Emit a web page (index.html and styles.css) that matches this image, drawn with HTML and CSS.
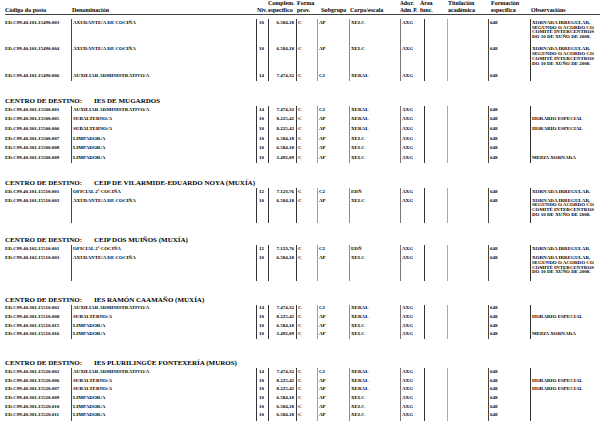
FILE: index.html
```html
<!DOCTYPE html>
<html lang="gl">
<head>
<meta charset="utf-8">
<title>Relación de postos</title>
<link rel="stylesheet" href="styles.css">
</head>
<body>
<div class="page">
  <div class="head">
    <div>Código do posto</div>
    <div>Denominación</div>
    <div>Niv.</div>
    <div>Complem.<br>específico</div>
    <div>Forma<br>prov.</div>
    <div>Subgrupo</div>
    <div>Corpo/escala</div>
    <div class="ads-h">Adscr.<br>Adm. P.</div>
    <div>Área<br>func.</div>
    <div>Titulación<br>académica</div>
    <div>Formación<br>específica</div>
    <div>Observacións</div>
  </div>

  <div class="sec first">
    <div class="row">
      <div class="c code">ED.C99.40.101.15490.003</div><div class="c den">AXUDANTE/A DE COCIÑA</div><div class="c niv">10</div><div class="c cmp">6.584,18</div><div class="c frm">C</div><div class="c sub">AP</div><div class="c crp">XELC</div><div class="c ads">AXG</div><div class="c are"></div><div class="c tit"></div><div class="c fmc">648</div><div class="c obs multi">XORNADA IRREGULAR,<br>SEGUNDO O ACORDO CO<br>COMITÉ INTERCENTROS<br>DO 10 DE XUÑO DE 2008.</div>
    </div>
    <div class="row">
      <div class="c code">ED.C99.40.101.15490.004</div><div class="c den">AXUDANTE/A DE COCIÑA</div><div class="c niv">10</div><div class="c cmp">6.584,18</div><div class="c frm">C</div><div class="c sub">AP</div><div class="c crp">XELC</div><div class="c ads">AXG</div><div class="c are"></div><div class="c tit"></div><div class="c fmc">648</div><div class="c obs multi">XORNADA IRREGULAR,<br>SEGUNDO O ACORDO CO<br>COMITÉ INTERCENTROS<br>DO 10 DE XUÑO DE 2008.</div>
    </div>
    <div class="row">
      <div class="c code">ED.C99.40.101.15490.006</div><div class="c den">AUXILIAR ADMINISTRATIVO/A</div><div class="c niv">14</div><div class="c cmp">7.474,32</div><div class="c frm">C</div><div class="c sub">C2</div><div class="c crp">XERAL</div><div class="c ads">AXG</div><div class="c are"></div><div class="c tit"></div><div class="c fmc">648</div><div class="c obs end"></div>
    </div>
  </div>

  <div class="dest">
    <span class="lbl">CENTRO DE DESTINO:</span><span>IES DE MUGARDOS</span>
  </div>
  <div class="sec loose">
    <div class="row">
      <div class="c code">ED.C99.40.301.15500.001</div><div class="c den">AUXILIAR ADMINISTRATIVO/A</div><div class="c niv">14</div><div class="c cmp">7.474,32</div><div class="c frm">C</div><div class="c sub">C2</div><div class="c crp">XERAL</div><div class="c ads">AXG</div><div class="c are"></div><div class="c tit"></div><div class="c fmc">648</div><div class="c obs"></div>
    </div>
    <div class="row">
      <div class="c code">ED.C99.40.301.15500.005</div><div class="c den">SUBALTERNO/A</div><div class="c niv">10</div><div class="c cmp">8.225,42</div><div class="c frm">C</div><div class="c sub">AP</div><div class="c crp">XERAL</div><div class="c ads">AXG</div><div class="c are"></div><div class="c tit"></div><div class="c fmc">648</div><div class="c obs">HORARIO ESPECIAL</div>
    </div>
    <div class="row">
      <div class="c code">ED.C99.40.301.15500.006</div><div class="c den">SUBALTERNO/A</div><div class="c niv">10</div><div class="c cmp">8.225,42</div><div class="c frm">C</div><div class="c sub">AP</div><div class="c crp">XERAL</div><div class="c ads">AXG</div><div class="c are"></div><div class="c tit"></div><div class="c fmc">648</div><div class="c obs">HORARIO ESPECIAL</div>
    </div>
    <div class="row">
      <div class="c code">ED.C99.40.301.15500.007</div><div class="c den">LIMPADOR/A</div><div class="c niv">10</div><div class="c cmp">6.584,18</div><div class="c frm">C</div><div class="c sub">AP</div><div class="c crp">XELC</div><div class="c ads">AXG</div><div class="c are"></div><div class="c tit"></div><div class="c fmc">648</div><div class="c obs"></div>
    </div>
    <div class="row">
      <div class="c code">ED.C99.40.301.15500.008</div><div class="c den">LIMPADOR/A</div><div class="c niv">10</div><div class="c cmp">6.584,18</div><div class="c frm">C</div><div class="c sub">AP</div><div class="c crp">XELC</div><div class="c ads">AXG</div><div class="c are"></div><div class="c tit"></div><div class="c fmc">648</div><div class="c obs"></div>
    </div>
    <div class="row">
      <div class="c code">ED.C99.40.301.15500.009</div><div class="c den">LIMPADOR/A</div><div class="c niv">10</div><div class="c cmp">3.492,09</div><div class="c frm">C</div><div class="c sub">AP</div><div class="c crp">XELC</div><div class="c ads">AXG</div><div class="c are"></div><div class="c tit"></div><div class="c fmc">648</div><div class="c obs">MEDIA XORNADA</div>
    </div>
  </div>

  <div class="dest">
    <span class="lbl">CENTRO DE DESTINO:</span><span>CEIP DE VILARMIDE-EDUARDO NOYA (MUXÍA)</span>
  </div>
  <div class="sec">
    <div class="row">
      <div class="c code">ED.C99.40.101.15510.001</div><div class="c den">OFICIAL 2ª COCIÑA</div><div class="c niv">12</div><div class="c cmp">7.123,76</div><div class="c frm">C</div><div class="c sub">C2</div><div class="c crp">EDÑ</div><div class="c ads">AXG</div><div class="c are"></div><div class="c tit"></div><div class="c fmc">648</div><div class="c obs">XORNADA IRREGULAR.</div>
    </div>
    <div class="row">
      <div class="c code">ED.C99.40.101.15510.003</div><div class="c den">AXUDANTE/A DE COCIÑA</div><div class="c niv">10</div><div class="c cmp">6.584,18</div><div class="c frm">C</div><div class="c sub">AP</div><div class="c crp">XELC</div><div class="c ads">AXG</div><div class="c are"></div><div class="c tit"></div><div class="c fmc">648</div><div class="c obs multi">XORNADA IRREGULAR,<br>SEGUNDO O ACORDO CO<br>COMITÉ INTERCENTROS<br>DO 10 DE XUÑO DE 2008.</div>
    </div>
  </div>

  <div class="dest gap-s">
    <span class="lbl">CENTRO DE DESTINO:</span><span>CEIP DOS MUIÑOS (MUXÍA)</span>
  </div>
  <div class="sec">
    <div class="row">
      <div class="c code">ED.C99.40.102.15510.001</div><div class="c den">OFICIAL 2ª COCIÑA</div><div class="c niv">12</div><div class="c cmp">7.123,76</div><div class="c frm">C</div><div class="c sub">C2</div><div class="c crp">EDÑ</div><div class="c ads">AXG</div><div class="c are"></div><div class="c tit"></div><div class="c fmc">648</div><div class="c obs">XORNADA IRREGULAR.</div>
    </div>
    <div class="row">
      <div class="c code">ED.C99.40.102.15510.003</div><div class="c den">AXUDANTE/A DE COCIÑA</div><div class="c niv">10</div><div class="c cmp">6.584,18</div><div class="c frm">C</div><div class="c sub">AP</div><div class="c crp">XELC</div><div class="c ads">AXG</div><div class="c are"></div><div class="c tit"></div><div class="c fmc">648</div><div class="c obs multi">XORNADA IRREGULAR,<br>SEGUNDO O ACORDO CO<br>COMITÉ INTERCENTROS<br>DO 10 DE XUÑO DE 2008.</div>
    </div>
  </div>

  <div class="dest gap-m">
    <span class="lbl">CENTRO DE DESTINO:</span><span>IES RAMÓN CAAMAÑO (MUXÍA)</span>
  </div>
  <div class="sec">
    <div class="row">
      <div class="c code">ED.C99.40.301.15510.002</div><div class="c den">AUXILIAR ADMINISTRATIVO/A</div><div class="c niv">14</div><div class="c cmp">7.474,32</div><div class="c frm">C</div><div class="c sub">C2</div><div class="c crp">XERAL</div><div class="c ads">AXG</div><div class="c are"></div><div class="c tit"></div><div class="c fmc">648</div><div class="c obs"></div>
    </div>
    <div class="row">
      <div class="c code">ED.C99.40.301.15510.008</div><div class="c den">SUBALTERNO/A</div><div class="c niv">10</div><div class="c cmp">8.225,42</div><div class="c frm">C</div><div class="c sub">AP</div><div class="c crp">XERAL</div><div class="c ads">AXG</div><div class="c are"></div><div class="c tit"></div><div class="c fmc">648</div><div class="c obs">HORARIO ESPECIAL</div>
    </div>
    <div class="row">
      <div class="c code">ED.C99.40.301.15510.015</div><div class="c den">LIMPADOR/A</div><div class="c niv">10</div><div class="c cmp">6.584,18</div><div class="c frm">C</div><div class="c sub">AP</div><div class="c crp">XELC</div><div class="c ads">AXG</div><div class="c are"></div><div class="c tit"></div><div class="c fmc">648</div><div class="c obs"></div>
    </div>
    <div class="row">
      <div class="c code">ED.C99.40.301.15510.016</div><div class="c den">LIMPADOR/A</div><div class="c niv">10</div><div class="c cmp">3.492,09</div><div class="c frm">C</div><div class="c sub">AP</div><div class="c crp">XELC</div><div class="c ads">AXG</div><div class="c are"></div><div class="c tit"></div><div class="c fmc">648</div><div class="c obs">MEDIA XORNADA</div>
    </div>
  </div>

  <div class="dest gap-l">
    <span class="lbl">CENTRO DE DESTINO:</span><span>IES PLURILINGÜE FONTEXERÍA (MUROS)</span>
  </div>
  <div class="sec">
    <div class="row">
      <div class="c code">ED.C99.40.301.15520.002</div><div class="c den">AUXILIAR ADMINISTRATIVO/A</div><div class="c niv">14</div><div class="c cmp">7.474,32</div><div class="c frm">C</div><div class="c sub">C2</div><div class="c crp">XERAL</div><div class="c ads">AXG</div><div class="c are"></div><div class="c tit"></div><div class="c fmc">648</div><div class="c obs"></div>
    </div>
    <div class="row">
      <div class="c code">ED.C99.40.301.15520.006</div><div class="c den">SUBALTERNO/A</div><div class="c niv">10</div><div class="c cmp">8.225,42</div><div class="c frm">C</div><div class="c sub">AP</div><div class="c crp">XERAL</div><div class="c ads">AXG</div><div class="c are"></div><div class="c tit"></div><div class="c fmc">648</div><div class="c obs">HORARIO ESPECIAL</div>
    </div>
    <div class="row">
      <div class="c code">ED.C99.40.301.15520.007</div><div class="c den">SUBALTERNO/A</div><div class="c niv">10</div><div class="c cmp">8.225,42</div><div class="c frm">C</div><div class="c sub">AP</div><div class="c crp">XERAL</div><div class="c ads">AXG</div><div class="c are"></div><div class="c tit"></div><div class="c fmc">648</div><div class="c obs">HORARIO ESPECIAL</div>
    </div>
    <div class="row">
      <div class="c code">ED.C99.40.301.15520.009</div><div class="c den">LIMPADOR/A</div><div class="c niv">10</div><div class="c cmp">6.584,18</div><div class="c frm">C</div><div class="c sub">AP</div><div class="c crp">XELC</div><div class="c ads">AXG</div><div class="c are"></div><div class="c tit"></div><div class="c fmc">648</div><div class="c obs"></div>
    </div>
    <div class="row">
      <div class="c code">ED.C99.40.301.15520.010</div><div class="c den">LIMPADOR/A</div><div class="c niv">10</div><div class="c cmp">6.584,18</div><div class="c frm">C</div><div class="c sub">AP</div><div class="c crp">XELC</div><div class="c ads">AXG</div><div class="c are"></div><div class="c tit"></div><div class="c fmc">648</div><div class="c obs"></div>
    </div>
    <div class="row">
      <div class="c code">ED.C99.40.301.15520.011</div><div class="c den">LIMPADOR/A</div><div class="c niv">10</div><div class="c cmp">6.584,18</div><div class="c frm">C</div><div class="c sub">AP</div><div class="c crp">XELC</div><div class="c ads">AXG</div><div class="c are"></div><div class="c tit"></div><div class="c fmc">648</div><div class="c obs end"></div>
    </div>
  </div>
</div>
</body>
</html>
```

FILE: styles.css
```css
html, body {
  margin: 0;
  padding: 0;
  background: #fff;
}

body {
  font-family: "Liberation Serif", "Times New Roman", serif;
  color: #000;
}

.page {
  width: 595px;
  padding-left: 5px;
}

/* column header */
.head {
  display: grid;
  grid-template-columns: 67px 185px 11px 29px 24px 29px 50px 20px 28px 43px 40px 69px;
  align-items: end;
  height: 14px;
  border-bottom: 1px solid #444;
  font-size: 6px;
  font-weight: bold;
  line-height: 7px;
  white-space: nowrap;
}

.ads-h {
  font-size: 5.4px;
  letter-spacing: -0.15px;
}

/* data rows */
.sec {
  font-size: 5px;
  font-weight: bold;
  line-height: 4.9px;
}

.sec.first {
  margin-top: 4px;
}

.row {
  display: grid;
  grid-template-columns: 66px 185px 12px 28px 21px 32px 51px 24px 23px 41px 42px 70px;
}

.c {
  box-sizing: border-box;
  padding: 1.6px 0 2.2px 1px;
  white-space: nowrap;
  border-left: 1px solid #333;
}

.loose .c {
  padding-top: 2.1px;
  padding-bottom: 2.6px;
}

.code {
  border-left: none;
  padding-left: 0;
}

.den { border-left-color: #444; }
.niv { padding-left: 2px; border-left-color: #333; }
.cmp { text-align: right; padding-right: 2px; border-left-color: #333; }
.frm { border-left-color: #333; }
.sub { border-left-color: #9a9a9a; }
.crp { border-left-color: #8a8a8a; }
.ads { border-left-color: #777; }
.are { border-left-color: #333; }
.tit { border-left-color: #a8a8a8; }
.fmc { border-left-color: #444; }
.obs { border-left-color: #333; }

.obs.multi {
  padding-bottom: 5.3px;
}

.first .obs.end {
  padding-bottom: 5.5px;
}

/* section titles */
.dest {
  display: flex;
  margin: 16px 0 1px;
  font-size: 7px;
  font-weight: bold;
  line-height: 8px;
  white-space: nowrap;
}

.dest.gap-s { margin-top: 13px; }
.dest.gap-m { margin-top: 15px; }
.dest.gap-l { margin-top: 20px; }

.dest .lbl {
  width: 89px;
  flex: none;
}
```
